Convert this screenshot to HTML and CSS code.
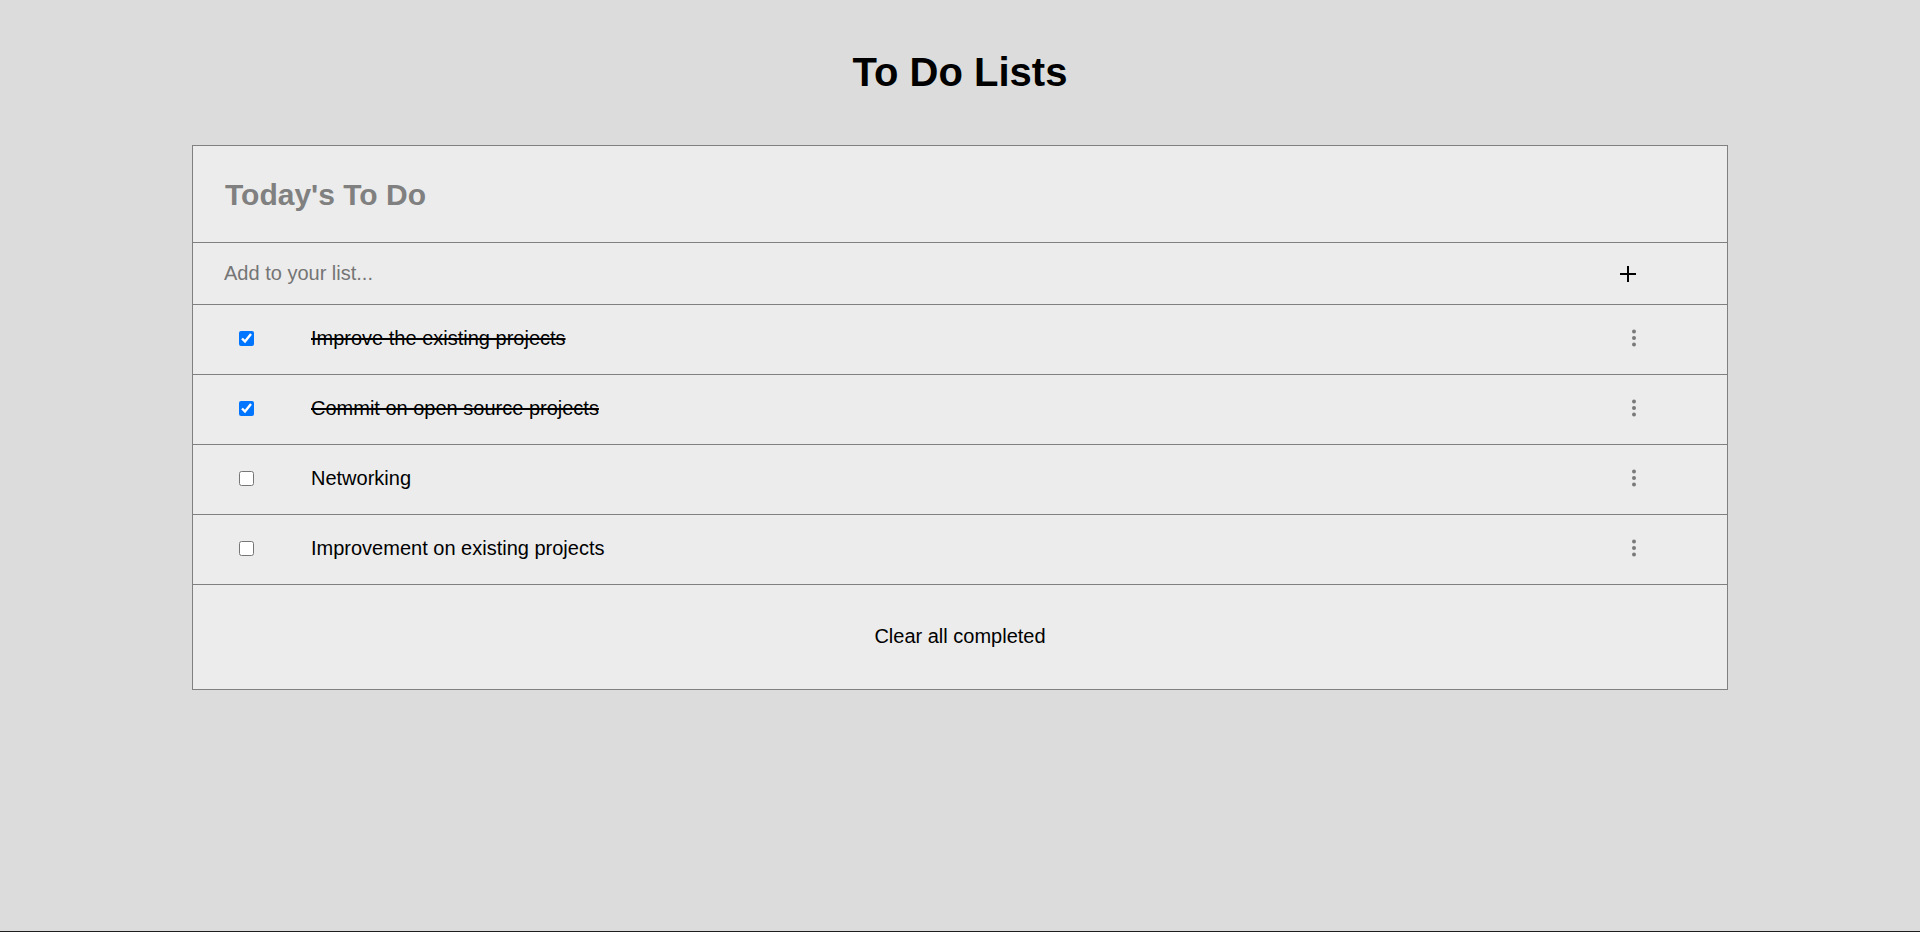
FILE: index.html
```html
<!DOCTYPE html>
<html lang="en">
<head>
<meta charset="utf-8">
<title>To Do Lists</title>
<link rel="stylesheet" href="styles.css">
</head>
<body>
<h1 class="page-title">To Do Lists</h1>
<section class="card">
  <header class="card-header">
    <h2 class="card-title">Today's To Do</h2>
  </header>
  <div class="add-row">
    <input class="add-input" type="text" placeholder="Add to your list...">
    <button class="add-btn" type="button" aria-label="Add">
      <svg width="16" height="16" viewBox="0 0 16 16"><path d="M8 0v16M0 8h16" stroke="#000" stroke-width="2"/></svg>
    </button>
  </div>
  <ul class="items">
    <li class="item">
      <input class="check" type="checkbox" checked>
      <span class="item-text done">Improve the existing projects</span>
      <svg class="more" width="6" height="20" viewBox="0 0 6 20"><circle cx="3" cy="3.5" r="2"/><circle cx="3" cy="10" r="2"/><circle cx="3" cy="16.5" r="2"/></svg>
    </li>
    <li class="item">
      <input class="check" type="checkbox" checked>
      <span class="item-text done">Commit on open source projects</span>
      <svg class="more" width="6" height="20" viewBox="0 0 6 20"><circle cx="3" cy="3.5" r="2"/><circle cx="3" cy="10" r="2"/><circle cx="3" cy="16.5" r="2"/></svg>
    </li>
    <li class="item">
      <input class="check" type="checkbox">
      <span class="item-text">Networking</span>
      <svg class="more" width="6" height="20" viewBox="0 0 6 20"><circle cx="3" cy="3.5" r="2"/><circle cx="3" cy="10" r="2"/><circle cx="3" cy="16.5" r="2"/></svg>
    </li>
    <li class="item">
      <input class="check" type="checkbox">
      <span class="item-text">Improvement on existing projects</span>
      <svg class="more" width="6" height="20" viewBox="0 0 6 20"><circle cx="3" cy="3.5" r="2"/><circle cx="3" cy="10" r="2"/><circle cx="3" cy="16.5" r="2"/></svg>
    </li>
  </ul>
  <footer class="card-footer">
    <button class="clear-btn" type="button">Clear all completed</button>
  </footer>
</section>
</body>
</html>
```
FILE: styles.css
```css
html, body {
  margin: 0;
  padding: 0;
}
body {
  background: #dcdcdc;
  font-family: "Liberation Sans", Arial, sans-serif;
  color: #000;
  min-height: 100vh;
  box-sizing: border-box;
  border-bottom: 1px solid #1e1e1e;
  padding-top: 50px;
}
.page-title {
  margin: 0 0 51px;
  font-size: 40px;
  line-height: 44px;
  font-weight: 700;
  text-align: center;
}
.card {
  width: 80%;
  margin: 0 auto;
  box-sizing: border-box;
  background: #ececec;
  border: 1px solid #808080;
}
.card-header {
  height: 97px;
  box-sizing: border-box;
  border-bottom: 1px solid #808080;
  display: flex;
  align-items: center;
  padding: 3px 32px 0;
}
.card-title {
  margin: 0;
  font-size: 30px;
  line-height: 1.15;
  font-weight: 700;
  color: #808080;
}
.add-row {
  height: 62px;
  box-sizing: border-box;
  border-bottom: 1px solid #808080;
  display: flex;
  align-items: center;
  padding: 0 91px 0 31px;
}
.add-input {
  flex: 1;
  border: none;
  background: transparent;
  outline: none;
  padding: 0;
  font-family: inherit;
  font-size: 20px;
  color: #000;
}
.add-input::placeholder {
  color: #757575;
}
.add-btn {
  border: none;
  background: transparent;
  padding: 0;
  margin: 0;
  display: flex;
  width: 16px;
  height: 16px;
}
.items {
  list-style: none;
  margin: 0;
  padding: 0;
}
.item {
  height: 70px;
  box-sizing: border-box;
  border-bottom: 1px solid #808080;
  display: flex;
  align-items: center;
  padding: 0 90px 3px 46px;
}
.check {
  width: 15px;
  height: 15px;
  margin: 0;
  flex: none;
}
.item-text {
  flex: 1;
  margin-left: 57px;
  font-size: 20px;
}
.item-text.done {
  text-decoration: line-through;
}
.more {
  fill: #7a7a7a;
  flex: none;
}
.card-footer {
  height: 104px;
  display: flex;
  align-items: center;
  justify-content: center;
  padding-bottom: 2px;
  box-sizing: border-box;
}
.clear-btn {
  border: none;
  background: transparent;
  padding: 0;
  font-family: inherit;
  font-size: 20px;
  color: #000;
}
```
